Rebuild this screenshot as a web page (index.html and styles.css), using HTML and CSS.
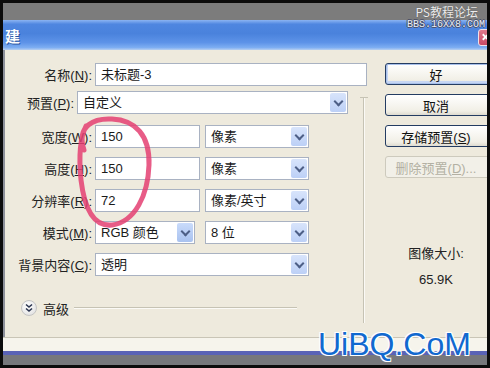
FILE: index.html
```html
<!DOCTYPE html>
<html lang="zh-CN">
<head>
    <meta charset="UTF-8">
    <meta name="viewport" content="width=device-width, initial-scale=1.0">
    <title>新建</title>
    <link rel="stylesheet" href="styles.css">
</head>
<body>
    <div class="screen">
        <div class="top-band"></div>

        <!-- Title bar -->
        <div class="title-bar">
            <span class="title-text">建</span>
            <span class="close-btn">
                <svg width="12" height="12" viewBox="0 0 12 12">
                    <path d="M3 3 L9 9 M9 3 L3 9" stroke="#fff" stroke-width="2"/>
                </svg>
            </span>
        </div>

        <div class="dialog">
            <div class="main">
                <div class="row">
                    <span class="label">名称(<u>N</u>):</span>
                    <div class="field field-name">未标题-3</div>
                </div>

                <div class="lower">
                    <div class="fields">
                        <div class="row row-preset">
                            <span class="label label-short">预置(<u>P</u>):</span>
                            <div class="field select field-preset">自定义<span class="arrow"></span></div>
                        </div>
                        <div class="row row-gap">
                            <span class="label">宽度(<u>W</u>):</span>
                            <div class="field field-num">150</div>
                            <div class="field select field-unit">像素<span class="arrow"></span></div>
                        </div>
                        <div class="row">
                            <span class="label">高度(<u>H</u>):</span>
                            <div class="field field-num">150</div>
                            <div class="field select field-unit">像素<span class="arrow"></span></div>
                        </div>
                        <div class="row">
                            <span class="label">分辨率(<u>R</u>):</span>
                            <div class="field field-num">72</div>
                            <div class="field select field-unit">像素/英寸<span class="arrow"></span></div>
                        </div>
                        <div class="row">
                            <span class="label">模式(<u>M</u>):</span>
                            <div class="field select field-mode">RGB 颜色<span class="arrow arrow-hot"></span></div>
                            <div class="field select field-unit">8 位<span class="arrow"></span></div>
                        </div>
                        <div class="row">
                            <span class="label">背景内容(<u>C</u>):</span>
                            <div class="field select field-bg">透明<span class="arrow"></span></div>
                        </div>

                        <!-- Advanced toggle -->
                        <div class="advanced">
                            <span class="adv-icon">
                                <svg width="10" height="10" viewBox="0 0 10 10">
                                    <path d="M2 1.5 L5 4 L8 1.5 M2 5.5 L5 8 L8 5.5" fill="none" stroke="#2b3550" stroke-width="1.6"/>
                                </svg>
                            </span>
                            <span class="adv-text">高级</span>
                            <span class="adv-line"></span>
                        </div>
                    </div>
                    <div class="divider"><span class="tick"></span><span class="vline"></span></div>
                </div>
            </div>

            <div class="side">
                <button class="btn btn-default">好</button>
                <button class="btn">取消</button>
                <button class="btn">存储预置(<u>S</u>)</button>
                <button class="btn btn-disabled">删除预置(<u>D</u>)...</button>

                <div class="size-info">
                    <div>图像大小:</div>
                    <div class="size-value">65.9K</div>
                </div>
            </div>
        </div>

        <div class="status-strip"></div>
        <div class="task-strip"></div>
        <div class="bottom-band"></div>

        <!-- Watermarks and the hand-drawn mark over the screenshot -->
        <div class="site-mark">
            <div class="site-name">PS教程论坛</div>
            <div class="site-url">BBS.16XX8.COM</div>
        </div>
        <div class="uibq">UiBQ.CoM</div>
        <svg class="red-loop" width="100" height="130" viewBox="70 110 100 130">
            <path d="M84 150 C76 125 95 118 112 119 C135 120 150 135 149 165 C148 195 135 222 112 225 C92 227 84 205 81 180 C79 160 79 140 86 126"
                  fill="none" stroke="#e43f72" stroke-width="5" stroke-linecap="round" opacity="0.85"/>
        </svg>
    </div>
</body>
</html>
```

FILE: styles.css
```css
body {
    margin: 0;
    padding: 0;
    background-color: #000;
    font-family: "Liberation Sans", "Noto Sans CJK SC", sans-serif;
    font-size: 13px;
    color: #111;
}

.screen {
    position: relative;
    width: 490px;
    height: 368px;
    box-sizing: border-box;
    border: 3px solid #0c0c0c;
    display: flex;
    flex-direction: column;
    overflow: hidden;
}

.top-band {
    height: 17px;
    background-color: #7c7c7c;
}

/* Title bar */
.title-bar {
    height: 30px;
    display: flex;
    align-items: center;
    justify-content: space-between;
    background: linear-gradient(to bottom, #8cb4f2 0%, #4f86e0 14%, #4a82dc 45%, #5d93e8 75%, #7eaef2 92%, #b8d0f0 100%);
}

.title-text {
    color: #fff;
    font-family: "Noto Sans CJK SC", sans-serif;
    font-size: 15px;
    font-weight: bold;
    margin-left: 2px;
    text-shadow: 1px 1px 0 #2a55a0;
}

.close-btn {
    width: 14px;
    height: 17px;
    margin-top: 4px;
    margin-right: -5px;
    box-sizing: border-box;
    border-radius: 3px;
    background: linear-gradient(to bottom, #e07a8e, #c84a66);
    border: 1px solid #f0e0e8;
    display: flex;
    align-items: center;
    padding-left: 1px;
    overflow: hidden;
}

/* Dialog body */
.dialog {
    height: 287px;
    box-sizing: border-box;
    display: flex;
    background-color: #eeeadd;
    border-left: 2px solid #8d909a;
    padding-top: 13px;
}

.main {
    width: 363px;
    display: flex;
    flex-direction: column;
}

.row {
    display: flex;
    align-items: center;
    gap: 5px;
    height: 23px;
    margin-top: 9px;
}

.main > .row {
    margin-top: 0;
}

.row-preset {
    margin-top: 0;
}

.row-gap {
    margin-top: 11px;
}

.label {
    width: 87px;
    margin-right: -2px;
    text-align: right;
    white-space: nowrap;
    color: #222;
}

.label-short {
    width: 69px;
    margin-right: -2px;
}

.field {
    position: relative;
    height: 23px;
    box-sizing: border-box;
    border: 1px solid #a9b2c2;
    background-color: #fff;
    padding-left: 5px;
    line-height: 21px;
    white-space: nowrap;
    color: #1a1a1a;
}

.field-name { width: 272px; }
.field-preset { width: 271px; }
.field-num { width: 105px; }
.field-unit { width: 104px; }
.field-mode { width: 100px; margin-right: 5px; }
.field-bg { width: 214px; }

/* Drop-down arrow button */
.arrow {
    position: absolute;
    top: 1px;
    right: 1px;
    width: 16px;
    height: 19px;
    border-radius: 2px;
    background: linear-gradient(to bottom, #d8e4fb, #bcd0f6);
}

.arrow::after {
    content: "";
    position: absolute;
    left: 5px;
    top: 5px;
    width: 5px;
    height: 5px;
    border-right: 2px solid #4d5f86;
    border-bottom: 2px solid #4d5f86;
    transform: rotate(45deg);
}

.arrow-hot {
    background: linear-gradient(to bottom, #c9dbfb, #a9c2ef);
}

.lower {
    flex: 1;
    display: flex;
    margin-top: 5px;
}

.fields {
    flex: 1;
}

.advanced {
    display: flex;
    align-items: center;
    height: 16px;
    margin-top: 24px;
    padding-left: 16px;
}

.adv-icon {
    width: 16px;
    height: 16px;
    box-sizing: border-box;
    border-radius: 50%;
    border: 1px solid #c4c4c4;
    background: radial-gradient(circle at 40% 35%, #ffffff, #dcdcdc);
    display: flex;
    align-items: center;
    justify-content: center;
}

.adv-text {
    margin-left: 6px;
    font-family: "Noto Sans CJK SC", sans-serif;
    font-size: 13px;
    color: #222;
}

.adv-line {
    width: 223px;
    margin-left: 5px;
    border-top: 1px solid #c6c3b4;
    border-bottom: 1px solid #fbfaf6;
}

.divider {
    width: 9px;
    display: flex;
    flex-direction: column;
    align-items: center;
    margin-top: 6px;
    margin-bottom: 14px;
}

.tick {
    width: 8px;
    border-top: 1px solid #c6c3b4;
}

.vline {
    flex: 1;
    width: 0;
    border-left: 1px solid #c6c3b4;
    border-right: 1px solid #fbfaf6;
}

/* Buttons column */
.side {
    flex: 1;
    margin-left: 17px;
    overflow: hidden;
    display: flex;
    flex-direction: column;
    align-items: flex-start;
}

.btn {
    width: 106px;
    height: 22px;
    margin-bottom: 9px;
    flex-shrink: 0;
    border: 1px solid #243c62;
    border-radius: 3px;
    background: linear-gradient(to bottom, #ffffff, #f1efe6 80%, #dedbd0);
    font-family: "Liberation Sans", "Noto Sans CJK SC", sans-serif;
    font-size: 13px;
    color: #111;
    padding: 0 4px 0 0;
}

.btn-default {
    box-shadow: inset 0 0 0 1px #a8c0ea, inset 0 -1px 0 2px #c6d6f3;
}

.btn-disabled {
    border-color: #cdcabd;
    color: #b3b0a3;
    background: #f2f0e8;
}

.size-info {
    width: 102px;
    margin-top: 59px;
    text-align: center;
    line-height: 16px;
    color: #222;
}

.size-value {
    margin-top: 10px;
}

/* Bottom of the window */
.status-strip {
    height: 14px;
    box-sizing: border-box;
    border-top: 1px solid #c9c5b6;
    background-color: #f6f4ec;
}

.task-strip {
    height: 4px;
    background-color: #5a63b6;
}

.bottom-band {
    height: 10px;
    background-color: #77787c;
}

/* Overlays */
.site-mark {
    position: absolute;
    top: 2px;
    right: 2px;
    text-align: right;
    color: #ececec;
}

.site-name {
    font-family: "Noto Sans CJK SC", sans-serif;
    font-size: 12px;
    line-height: 14px;
    padding-right: 7px;
    text-shadow: 0 0 1px #444;
}

.site-url {
    font-family: "Liberation Mono", monospace;
    font-size: 10px;
    line-height: 10px;
    margin-top: 1px;
    color: #e8eefa;
    text-shadow: 1px 0 0 #4a4f66, -1px 0 0 #4a4f66, 0 1px 0 #4a4f66, 0 -1px 0 #4a4f66;
}

.uibq {
    position: absolute;
    left: 315px;
    top: 325px;
    font-family: "Liberation Sans", sans-serif;
    font-size: 32px;
    line-height: 32px;
    color: #1169cf;
    text-shadow: 1px 1px 0 #fff, -1px -1px 0 #fff, 1px -1px 0 #fff, -1px 1px 0 #fff;
}

.red-loop {
    position: absolute;
    left: 67px;
    top: 107px;
}
```
